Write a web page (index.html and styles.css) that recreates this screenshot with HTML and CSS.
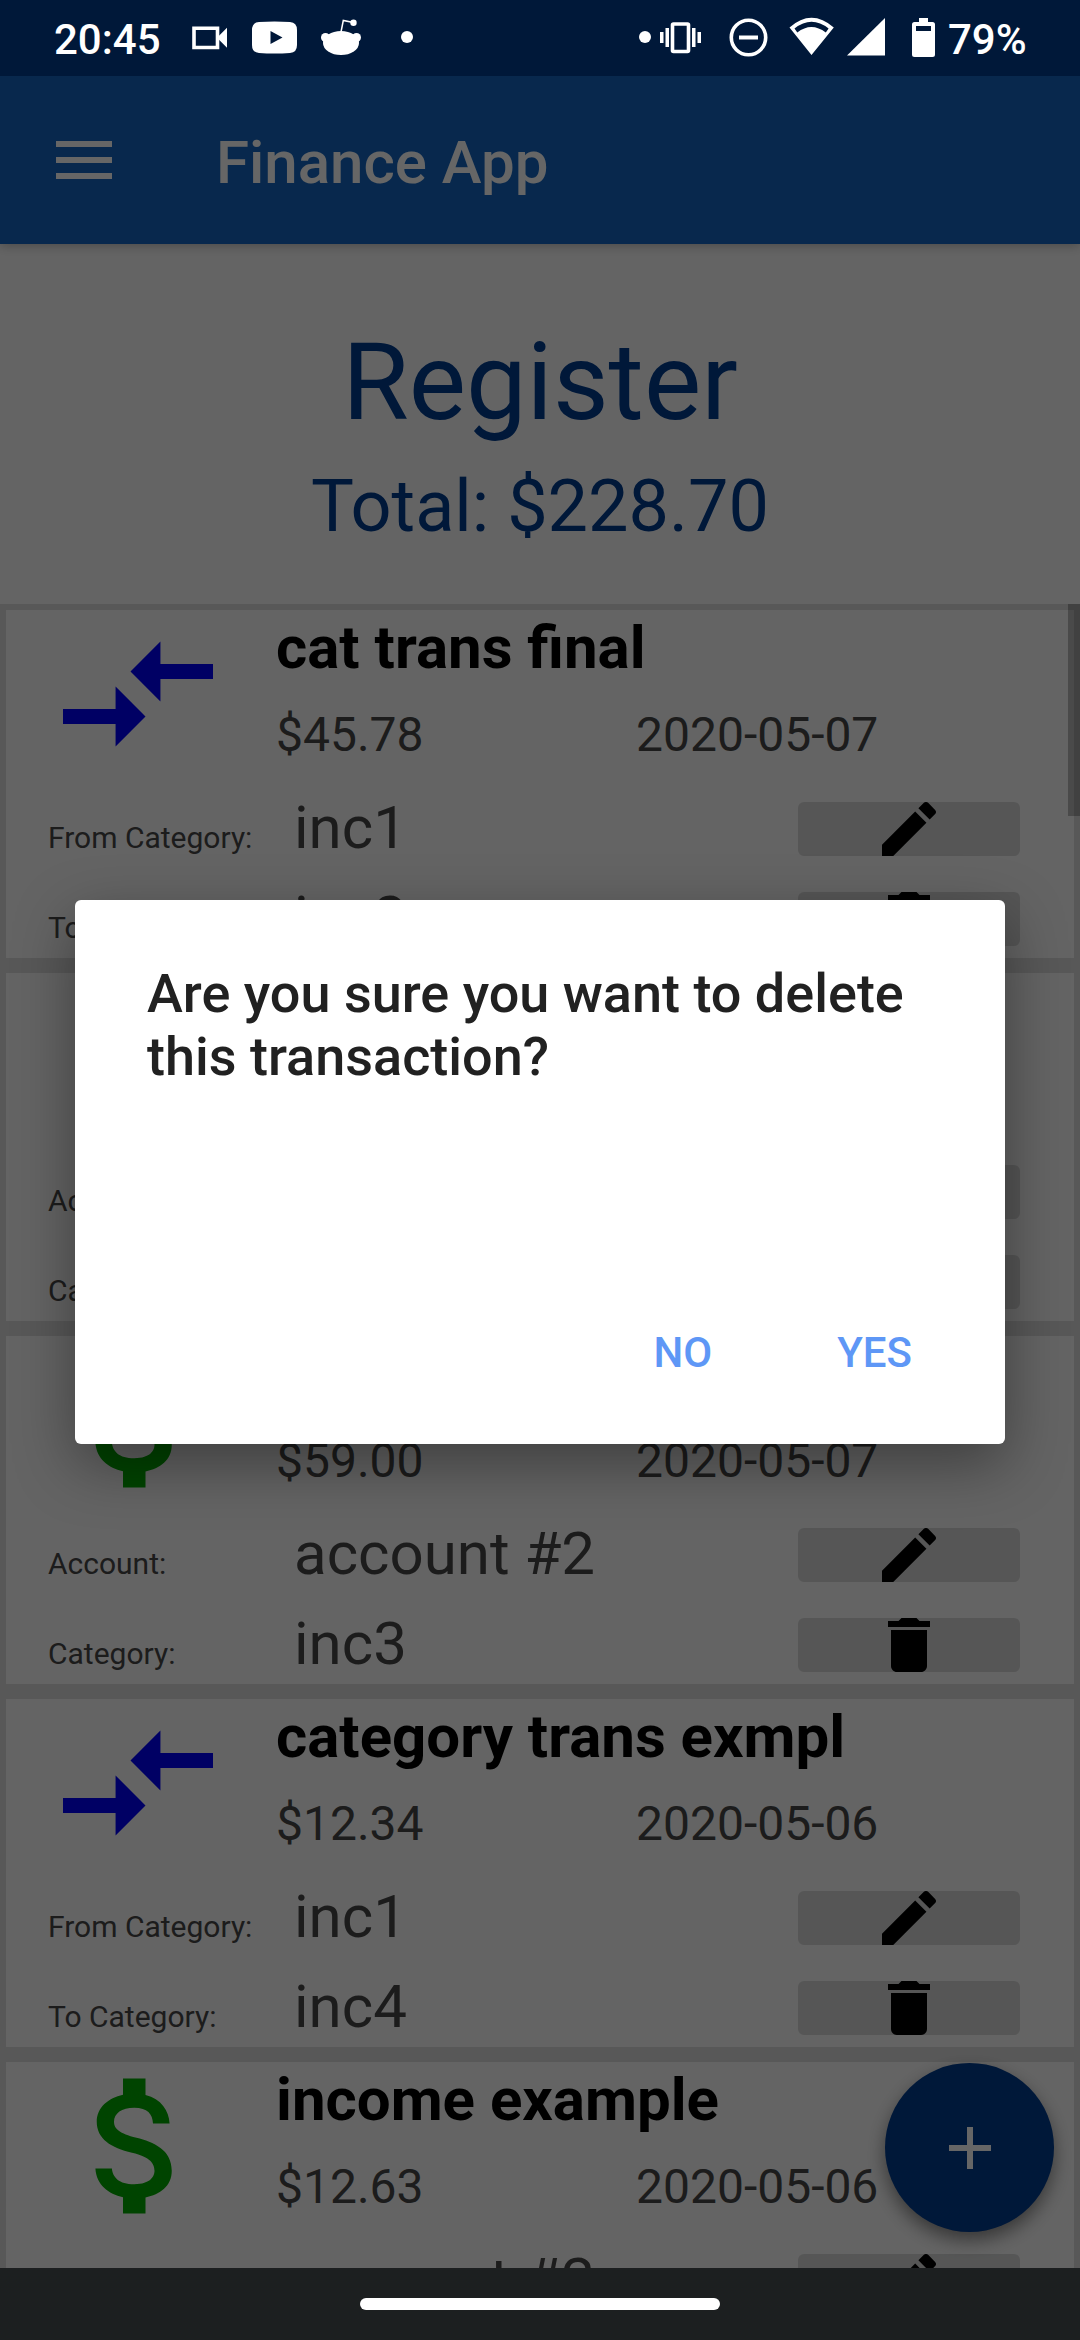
FILE: index.html
```html
<!DOCTYPE html>
<html lang="en">
<head>
<meta charset="utf-8">
<title>Finance App</title>
<link rel="stylesheet" href="styles.css">
</head>
<body>
<svg class="defs" width="0" height="0" aria-hidden="true">
  <symbol id="transfer" viewBox="0 0 24 24"><path d="M9.01 14H2v2h7.01v3L13 15l-3.99-4v3zm5.98-1v-3H22V8h-7.01V5L11 9l3.99 4z"/></symbol>
  <symbol id="money" viewBox="0 0 24 24"><path d="M11.8 10.9c-2.27-.59-3-1.2-3-2.15 0-1.09 1.01-1.85 2.7-1.85 1.78 0 2.44.85 2.5 2.1h2.21c-.07-1.72-1.12-3.3-3.21-3.81V3h-3v2.16c-1.94.42-3.5 1.68-3.5 3.61 0 2.31 1.91 3.46 4.7 4.13 2.5.6 3 1.48 3 2.41 0 .69-.49 1.79-2.7 1.79-2.06 0-2.87-.92-2.98-2.1h-2.2c.12 2.19 1.76 3.42 3.68 3.83V21h3v-2.15c1.95-.37 3.5-1.5 3.5-3.55 0-2.84-2.43-3.81-4.7-4.4z"/></symbol>
  <symbol id="edit" viewBox="3 3 18 18"><path d="M3 17.25V21h3.75L17.81 9.94l-3.75-3.75L3 17.25zM20.71 7.04c.39-.39.39-1.02 0-1.41l-2.34-2.34c-.39-.39-1.02-.39-1.41 0l-1.83 1.83 3.75 3.75 1.83-1.83z"/></symbol>
  <symbol id="delete" viewBox="3 3 18 18"><path d="M6 19c0 1.1.9 2 2 2h8c1.1 0 2-.9 2-2V7H6v12zM19 4h-3.5l-1-1h-5l-1 1H5v2h14V4z"/></symbol>
</svg>
<div class="screen">
  <header class="status">
    <span class="clock">20:45</span>
    <svg class="notifications" width="240" height="76" viewBox="180 0 240 76">
      <path d="M194 28.300h23.500v19.200h-23.500z" class="cam"/>
      <path d="M217 37.800l10-10v20z"/>
      <path fill-rule="evenodd" d="M259 22q15.500-1 31 0 7 .5 7 8v15q0 7.500-7 8-15.500 1-31 0-7-.5-7-8V30q0-7.500 7-8zM270.500 31v13l12-6.500z"/>
      <ellipse cx="341" cy="43" rx="18" ry="12"/>
      <circle cx="325.500" cy="37.500" r="4.500"/><circle cx="356.500" cy="37.500" r="4.500"/><circle cx="353.500" cy="22.800" r="3.200"/>
      <path d="M341 32l2.300-11.500 10 2" class="antenna"/>
      <circle cx="407" cy="37" r="6"/>
    </svg>
    <svg class="system" width="300" height="76" viewBox="636 0 300 76">
      <circle cx="645" cy="37" r="6"/>
      <rect x="672.500" y="24" width="16" height="27.500" rx="1" class="line"/>
      <path d="M660 32h3.500v11H660zM665.500 28h3.500v19h-3.500zM692 28h3.500v19H692zM697.500 32h3.500v11h-3.500z"/>
      <circle cx="748.500" cy="37.500" r="17.200" class="line"/><path d="M739 35.500h19v4h-19z"/>
      <path fill-rule="evenodd" d="M789.500 27.500Q811.500 8 833.800 27.500L811.500 55zM794.500 28.500l2.800 4q14-11 28.500 0l2.800-4q-17-13.500-34.100 0z"/>
      <path d="M885 18v37.500h-38z"/>
      <path fill-rule="evenodd" d="M919 18h9v4h4.500q2.500 0 2.500 2.500v30q0 2.500-2.500 2.500h-18q-2.500 0-2.500-2.500v-30q0-2.500 2.500-2.500h4.500zM916 26v5h15v-5z"/>
    </svg>
    <span class="battery">79%</span>
  </header>

  <div class="app">
    <div class="appbar">
      <div class="menu"><i></i><i></i><i></i></div>
      <h1>Finance App</h1>
    </div>
    <div class="summary">
      <h2>Register</h2>
      <p>Total: $228.70</p>
    </div>
    <div class="list">
      <article class="card">
        <svg class="kind transfer"><use href="#transfer"/></svg>
        <h3>cat trans final</h3>
        <div class="meta"><span>$45.78</span><span>2020-05-07</span></div>
        <div class="row"><label>From Category:</label><b>inc1</b><button><svg><use href="#edit"/></svg></button></div>
        <div class="row"><label>To Category:</label><b>inc2</b><button><svg><use href="#delete"/></svg></button></div>
      </article>
      <article class="card">
        <div class="row first"><label>Account:</label><b></b><button></button></div>
        <div class="row"><label>Category:</label><b></b><button></button></div>
      </article>
      <article class="card">
        <svg class="kind income"><use href="#money"/></svg>
        <h3></h3>
        <div class="meta"><span>$59.00</span><span>2020-05-07</span></div>
        <div class="row"><label>Account:</label><b>account #2</b><button><svg><use href="#edit"/></svg></button></div>
        <div class="row"><label>Category:</label><b>inc3</b><button><svg><use href="#delete"/></svg></button></div>
      </article>
      <article class="card">
        <svg class="kind transfer"><use href="#transfer"/></svg>
        <h3>category trans exmpl</h3>
        <div class="meta"><span>$12.34</span><span>2020-05-06</span></div>
        <div class="row"><label>From Category:</label><b>inc1</b><button><svg><use href="#edit"/></svg></button></div>
        <div class="row"><label>To Category:</label><b>inc4</b><button><svg><use href="#delete"/></svg></button></div>
      </article>
      <article class="card">
        <svg class="kind income"><use href="#money"/></svg>
        <h3>income example</h3>
        <div class="meta"><span>$12.63</span><span>2020-05-06</span></div>
        <div class="row"><label></label><b>account #2</b><button><svg><use href="#edit"/></svg></button></div>
      </article>
      <div class="scrollbar"></div>
    </div>
    <div class="fab"><svg width="42" height="42" viewBox="0 0 42 42"><path d="M18 0h6v18h18v6H24v18h-6V24H0v-6h18z"/></svg></div>
  </div>

  <footer class="nav"><i></i></footer>

  <div class="scrim">
    <section class="dialog" role="dialog">
      <p>Are you sure you want to delete this transaction?</p>
      <div class="actions"><a>NO</a><a>YES</a></div>
    </section>
  </div>
</div>
</body>
</html>
```

FILE: styles.css
```css
* { box-sizing: border-box; margin: 0; }
body { font-family: Roboto, "Noto Sans", sans-serif; }
.defs { position: absolute; }
.screen { position: relative; width: 1080px; height: 2340px; display: flex; flex-direction: column; overflow: hidden; }

.status { height: 76px; flex: none; background: #001839; color: #fff; display: flex; align-items: center; font-size: 42px; font-weight: 500; line-height: 76px; padding-left: 54px; }
.status svg { fill: #fff; flex: none; }
.clock { width: 126px; padding-top: 3px; }
.notifications { margin-right: 216px; }
.battery { padding: 3px 0 0 12px; }
.status .line { fill: none; stroke: #fff; stroke-width: 3.6; }
.status .cam { stroke: #fff; stroke-width: 3.6; fill: none; }
.status .antenna { fill: none; stroke: #fff; stroke-width: 1.5; }

.app { flex: 1; min-height: 0; display: flex; flex-direction: column; background: #fafafa; position: relative; z-index: 0; overflow: hidden; }
.appbar { height: 168px; flex: none; background: #1565c0; display: flex; align-items: center; padding: 0 56px; box-shadow: 0 2px 10px rgba(0,0,0,.25); z-index: 1; }
.menu { display: flex; flex-direction: column; gap: 10px; width: 56px; margin-right: 104px; }
.menu i { height: 6px; background: #fff; }
.appbar h1 { font-size: 60px; font-weight: 500; line-height: 70px; color: #fff; padding-top: 6px; }
.summary { height: 360px; flex: none; text-align: center; color: #003c8f; padding-top: 73px; }
.summary h2 { font-size: 108px; font-weight: 400; line-height: 130px; }
.summary p { font-size: 72px; line-height: 86px; padding-top: 17px; }

.list { position: relative; background: #ddd; padding: 6px 6px 0; display: flex; flex-direction: column; gap: 15px; flex: 1; min-height: 0; overflow: hidden; }
.card { position: relative; height: 348px; flex: none; background: #fafafa; }
.kind { position: absolute; left: 42px; top: -6px; width: 180px; height: 180px; }
.transfer { fill: #0000fa; }
.income { fill: #00aa00; }
.card h3 { height: 74px; padding-left: 270px; font-size: 60px; font-weight: 700; line-height: 76px; color: #000; }
.meta { height: 103px; display: grid; grid-template-columns: 360px auto; padding-left: 270px; font-size: 48px; line-height: 102px; color: #484848; }
.row { display: grid; grid-template-columns: 246px 504px 222px; padding-left: 42px; height: 90px; align-items: start; color: #484848; }
.row.first { margin-top: 177px; }
.row label { font-size: 30px; line-height: 36px; padding-top: 33px; }
.row b { font-size: 60px; font-weight: 400; line-height: 70px; padding-top: 6px; }
.row button { width: 222px; height: 54px; margin-top: 15px; padding: 0; border: 0; border-radius: 6px; background: #d6d7d7; display: flex; justify-content: center; }
.row button svg { width: 54px; height: 54px; }
.card:nth-child(2) { padding-top: 177px; }
.card:nth-child(2) .first { margin-top: 0; }
.scrollbar { position: absolute; right: 0; top: 0; width: 12px; height: 212px; background: rgba(0,0,0,.26); }
.fab { position: absolute; left: 885px; top: 1987px; width: 169px; height: 169px; border-radius: 50%; background: #003c8f; display: flex; align-items: center; justify-content: center; box-shadow: 0 8px 18px rgba(0,0,0,.45); }
.fab svg { fill: #fff; }

.nav { height: 72px; flex: none; background: #1c1f20; display: flex; align-items: center; justify-content: center; }
.nav i { width: 360px; height: 12px; border-radius: 6px; background: #fff; }

.scrim { position: absolute; z-index: 1; inset: 76px 0 72px; background: rgba(0,0,0,.6); padding: 824px 75px 0; }
.dialog { height: 544px; background: #fff; border-radius: 6px; padding: 62px 72px 0; box-shadow: 0 20px 60px rgba(0,0,0,.38); display: flex; flex-direction: column; }
.dialog p { font-size: 54px; font-weight: 500; line-height: 63px; color: #212121; height: 328px; }
.actions { display: flex; justify-content: flex-end; gap: 125px; padding-right: 21px; font-size: 42px; font-weight: 500; line-height: 126px; color: #5e97f6; }
```
